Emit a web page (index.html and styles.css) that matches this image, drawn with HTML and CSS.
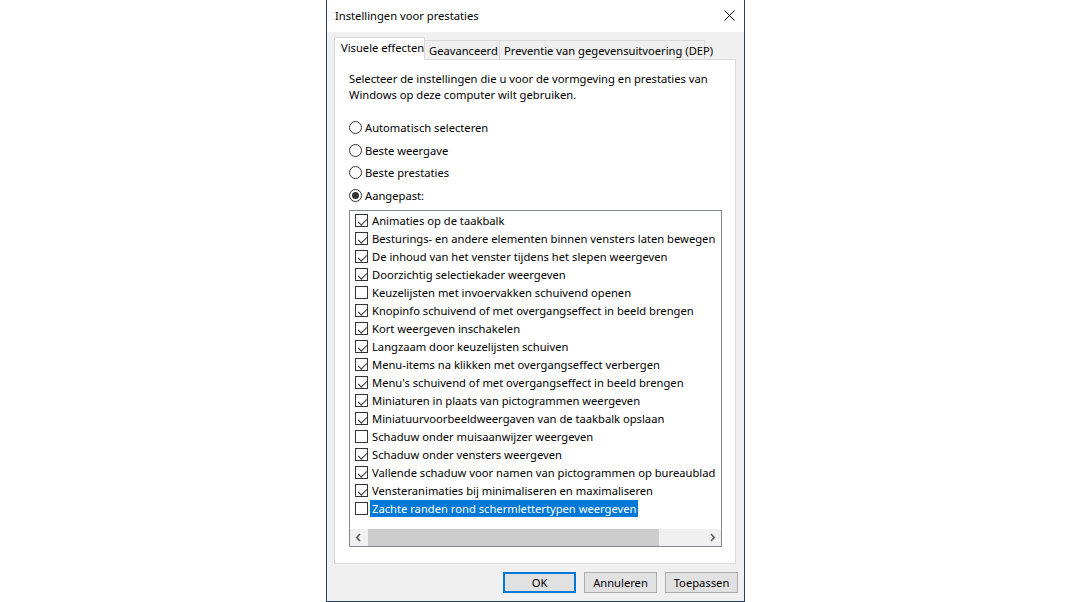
FILE: index.html
```html
<!DOCTYPE html>
<html lang="nl">
<head>
<meta charset="utf-8">
<title>Instellingen voor prestaties</title>
<link rel="stylesheet" href="styles.css">
</head>
<body>
<div class="dialog">
  <div class="titlebar">
    <span class="title">Instellingen voor prestaties</span>
    <svg class="close" width="11" height="11" viewBox="0 0 11 11"><path d="M0.5 0.5 L10.5 10.5 M10.5 0.5 L0.5 10.5" stroke="#000" stroke-width="1" fill="none"/></svg>
  </div>
  <div class="body">
    <div class="tabs">
      <div class="tab tab-active tab-w1">Visuele effecten</div>
      <div class="tab tab-w2">Geavanceerd</div>
      <div class="tab tab-w3">Preventie van gegevensuitvoering (DEP)</div>
    </div>
    <div class="panel">
      <p class="intro">Selecteer de instellingen die u voor de vormgeving en prestaties van<br>Windows op deze computer wilt gebruiken.</p>
      <div class="radios">
        <div class="radio"><svg width="13" height="13" viewBox="0 0 13 13"><circle cx="6.5" cy="6.5" r="6" fill="#fff" stroke="#333"/></svg><span>Automatisch selecteren</span></div>
        <div class="radio"><svg width="13" height="13" viewBox="0 0 13 13"><circle cx="6.5" cy="6.5" r="6" fill="#fff" stroke="#333"/></svg><span>Beste weergave</span></div>
        <div class="radio"><svg width="13" height="13" viewBox="0 0 13 13"><circle cx="6.5" cy="6.5" r="6" fill="#fff" stroke="#333"/></svg><span>Beste prestaties</span></div>
        <div class="radio"><svg width="13" height="13" viewBox="0 0 13 13"><circle cx="6.5" cy="6.5" r="6" fill="#fff" stroke="#333"/><circle cx="6.5" cy="6.5" r="3.5" fill="#333"/></svg><span>Aangepast:</span></div>
      </div>
      <div class="listbox">
        <div class="items">
          <div class="item"><span class="cb on"></span><span class="lbl">Animaties op de taakbalk</span></div>
          <div class="item"><span class="cb on"></span><span class="lbl">Besturings- en andere elementen binnen vensters laten bewegen</span></div>
          <div class="item"><span class="cb on"></span><span class="lbl">De inhoud van het venster tijdens het slepen weergeven</span></div>
          <div class="item"><span class="cb on"></span><span class="lbl">Doorzichtig selectiekader weergeven</span></div>
          <div class="item"><span class="cb"></span><span class="lbl">Keuzelijsten met invoervakken schuivend openen</span></div>
          <div class="item"><span class="cb on"></span><span class="lbl">Knopinfo schuivend of met overgangseffect in beeld brengen</span></div>
          <div class="item"><span class="cb on"></span><span class="lbl">Kort weergeven inschakelen</span></div>
          <div class="item"><span class="cb on"></span><span class="lbl">Langzaam door keuzelijsten schuiven</span></div>
          <div class="item"><span class="cb on"></span><span class="lbl">Menu-items na klikken met overgangseffect verbergen</span></div>
          <div class="item"><span class="cb on"></span><span class="lbl">Menu's schuivend of met overgangseffect in beeld brengen</span></div>
          <div class="item"><span class="cb on"></span><span class="lbl">Miniaturen in plaats van pictogrammen weergeven</span></div>
          <div class="item"><span class="cb on"></span><span class="lbl">Miniatuurvoorbeeldweergaven van de taakbalk opslaan</span></div>
          <div class="item"><span class="cb"></span><span class="lbl">Schaduw onder muisaanwijzer weergeven</span></div>
          <div class="item"><span class="cb on"></span><span class="lbl">Schaduw onder vensters weergeven</span></div>
          <div class="item"><span class="cb on"></span><span class="lbl">Vallende schaduw voor namen van pictogrammen op bureaublad</span></div>
          <div class="item"><span class="cb on"></span><span class="lbl">Vensteranimaties bij minimaliseren en maximaliseren</span></div>
          <div class="item"><span class="cb"></span><span class="lbl sel">Zachte randen rond schermlettertypen weergeven</span></div>
        </div>
        <div class="hscroll">
          <div class="arrow"><svg width="7" height="9" viewBox="0 0 7 9"><path d="M5 1 L1.8 4.5 L5 8" stroke="#606060" stroke-width="1.7" fill="none"/></svg></div>
          <div class="track"><div class="thumb"></div></div>
          <div class="arrow"><svg width="7" height="9" viewBox="0 0 7 9"><path d="M2 1 L5.2 4.5 L2 8" stroke="#606060" stroke-width="1.7" fill="none"/></svg></div>
        </div>
      </div>
    </div>
    <div class="buttons">
      <button class="btn btn-default">OK</button>
      <button class="btn">Annuleren</button>
      <button class="btn">Toepassen</button>
    </div>
  </div>
</div>
</body>
</html>
```
FILE: styles.css
```css
* { box-sizing: border-box; }
html, body { margin: 0; padding: 0; background: #fff; }
body {
  width: 1070px;
  height: 602px;
  overflow: hidden;
  display: flex;
  justify-content: center;
  font-family: "Noto Sans", "Open Sans", sans-serif;
  font-size: 11.2px;
  color: #000;
}
.dialog {
  width: 419px;
  height: 602px;
  margin-left: 1px;
  border: 1px solid #24405f;
  border-top: none;
  display: flex;
  flex-direction: column;
  background: #f0f0f0;
}
.titlebar {
  height: 32px;
  background: #fff;
  display: flex;
  align-items: center;
  justify-content: space-between;
  padding: 0 9px 1px 8px;
  flex: none;
}
.title { font-size: 11.2px; }
.close { display: block; margin-bottom: 1px; }
.body {
  flex: 1;
  padding: 5px 6px 8px 7px;
  display: flex;
  flex-direction: column;
}
.tabs {
  display: flex;
  align-items: flex-end;
  height: 22px;
  flex: none;
}
.tab {
  height: 19px;
  border: 1px solid #d9d9d9;
  border-bottom: none;
  border-left: none;
  background: #f0f0f0;
  line-height: 19px;
  padding-left: 4px;
  white-space: nowrap;
}
.tab-active {
  height: 23px;
  margin-bottom: -1px;
  background: #fff;
  border-left: 1px solid #d9d9d9;
  position: relative;
  z-index: 1;
  line-height: 19px;
  padding-left: 6px;
}
.tab-w1 { width: 91px; }
.tab-w2 { width: 75px; }
.tab-w3 { width: 205px; }
.panel {
  height: 505px;
  width: 402px;
  background: #fff;
  border: 1px solid #d9d9d9;
  padding: 11px 13px 0 14px;
  flex: none;
}
.intro {
  margin: 0;
  line-height: 15.5px;
  white-space: nowrap;
}
.radios {
  margin-top: 14px;
  display: flex;
  flex-direction: column;
}
.radio {
  height: 22.7px;
  display: flex;
  align-items: center;
  gap: 3px;
}
.radio svg { display: block; flex: none; }
.listbox {
  margin-top: 3px;
  width: 373px;
  height: 337px;
  border: 1px solid #828790;
  display: flex;
  flex-direction: column;
}
.items {
  height: 318px;
  padding: 1px 0 0 5px;
  overflow: hidden;
}
.item {
  height: 18px;
  display: flex;
  align-items: center;
  white-space: nowrap;
}
.cb {
  width: 13px;
  height: 13px;
  border: 1px solid #333;
  flex: none;
  position: relative;
  background: #fff;
}
.cb.on::after {
  content: "";
  position: absolute;
  left: 1.5px;
  top: 0.5px;
  width: 7px;
  height: 4px;
  border-left: 1px solid #333;
  border-bottom: 1px solid #333;
  transform: translate(0.5px, 2.5px) rotate(-45deg) scale(1.05, 1);
}
.lbl {
  margin-left: 2px;
  padding: 0 2px;
  height: 17px;
  line-height: 17px;
}
.lbl.sel {
  background: #0078d7;
  color: #fff;
}
.hscroll {
  height: 17px;
  background: #f0f0f0;
  display: flex;
  flex: none;
}
.arrow {
  width: 17px;
  display: flex;
  align-items: center;
  justify-content: center;
}
.arrow svg { display: block; }
.track {
  flex: 1;
  display: flex;
  padding: 0 0 0 1px;
}
.thumb {
  width: 291px;
  background: #cdcdcd;
}
.buttons {
  margin-top: 8px;
  display: flex;
  justify-content: flex-end;
  gap: 8px;
  height: 21px;
}
.btn {
  width: 73px;
  height: 21px;
  border: 1px solid #adadad;
  background: #e1e1e1;
  font-family: inherit;
  font-size: 11.2px;
  color: #000;
  padding: 0;
  margin: 0;
}
.btn-default {
  border: 2px solid #0078d7;
}
```
